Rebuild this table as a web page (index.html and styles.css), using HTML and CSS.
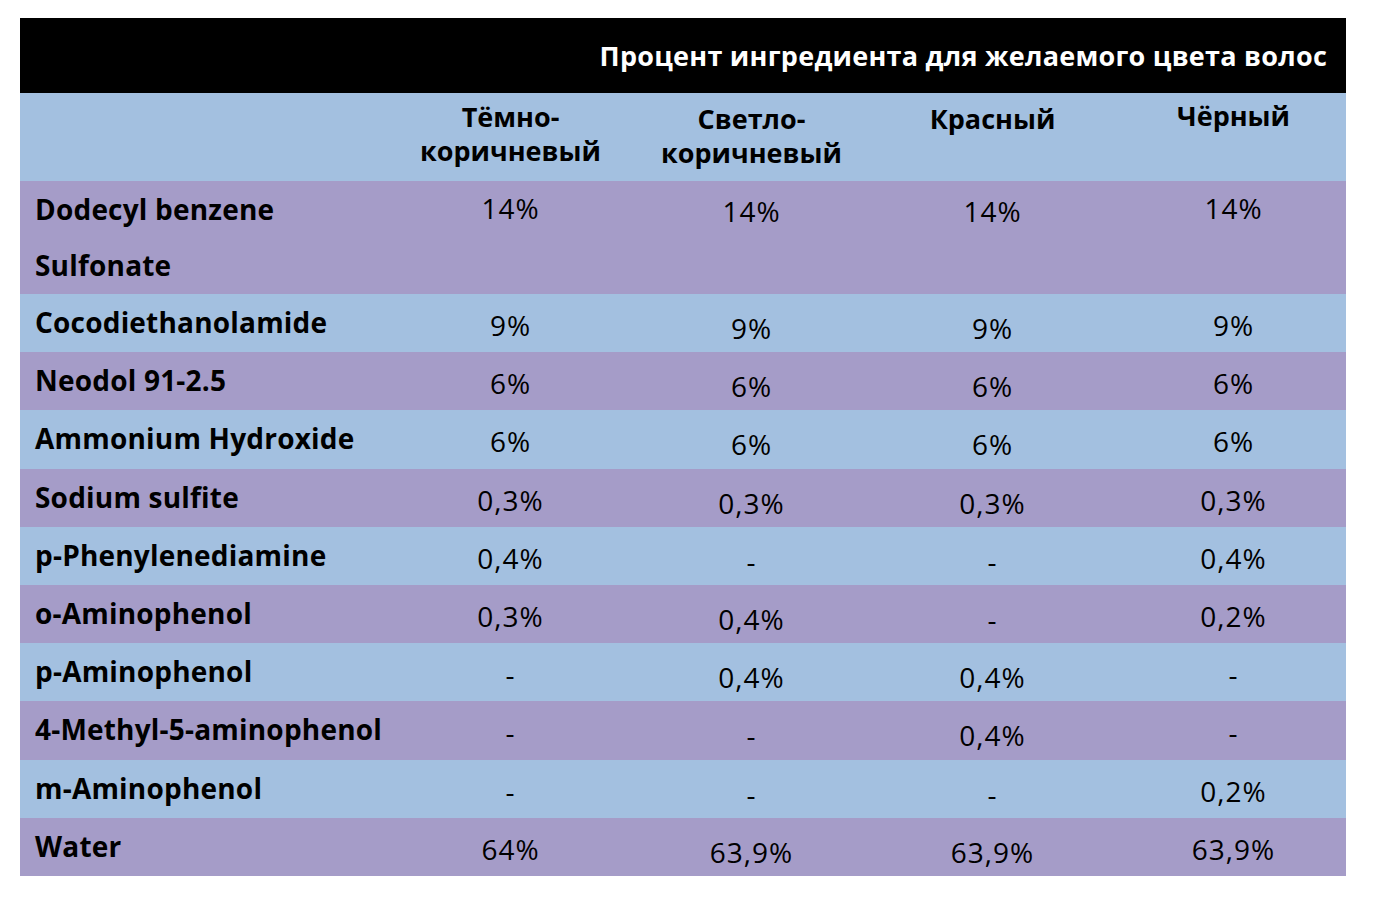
FILE: index.html
```html
<!DOCTYPE html>
<html lang="ru">
<head>
<meta charset="utf-8">
<title>Процент ингредиента</title>
<link rel="stylesheet" href="styles.css">
</head>
<body>
<div class="sheet">
<table class="recipe">
  <colgroup>
    <col class="c-name">
    <col class="c-val">
    <col class="c-val">
    <col class="c-val">
    <col class="c-last">
  </colgroup>
  <thead>
    <tr class="title-row">
      <th colspan="5" class="title">Процент ингредиента для желаемого цвета волос</th>
    </tr>
    <tr class="head-row">
      <th class="blank"></th>
      <th class="h h2">Тёмно-<br>коричневый</th>
      <th class="h h3">Светло-<br>коричневый</th>
      <th class="h h4">Красный</th>
      <th class="h h5">Чёрный</th>
    </tr>
  </thead>
  <tbody>
    <tr class="odd first"><td class="name">Dodecyl benzene<br>Sulfonate</td><td class="v v2">14%</td><td class="v v3">14%</td><td class="v v4">14%</td><td class="v v5">14%</td></tr>
    <tr class="even"><td class="name">Cocodiethanolamide</td><td class="v v2">9%</td><td class="v v3">9%</td><td class="v v4">9%</td><td class="v v5">9%</td></tr>
    <tr class="odd"><td class="name">Neodol 91-2.5</td><td class="v v2">6%</td><td class="v v3">6%</td><td class="v v4">6%</td><td class="v v5">6%</td></tr>
    <tr class="even"><td class="name">Ammonium Hydroxide</td><td class="v v2">6%</td><td class="v v3">6%</td><td class="v v4">6%</td><td class="v v5">6%</td></tr>
    <tr class="odd"><td class="name">Sodium sulfite</td><td class="v v2">0,3%</td><td class="v v3">0,3%</td><td class="v v4">0,3%</td><td class="v v5">0,3%</td></tr>
    <tr class="even"><td class="name">p-Phenylenediamine</td><td class="v v2">0,4%</td><td class="v v3">-</td><td class="v v4">-</td><td class="v v5">0,4%</td></tr>
    <tr class="odd"><td class="name">o-Aminophenol</td><td class="v v2">0,3%</td><td class="v v3">0,4%</td><td class="v v4">-</td><td class="v v5">0,2%</td></tr>
    <tr class="even"><td class="name">p-Aminophenol</td><td class="v v2">-</td><td class="v v3">0,4%</td><td class="v v4">0,4%</td><td class="v v5">-</td></tr>
    <tr class="odd"><td class="name">4-Methyl-5-aminophenol</td><td class="v v2">-</td><td class="v v3">-</td><td class="v v4">0,4%</td><td class="v v5">-</td></tr>
    <tr class="even"><td class="name">m-Aminophenol</td><td class="v v2">-</td><td class="v v3">-</td><td class="v v4">-</td><td class="v v5">0,2%</td></tr>
    <tr class="odd"><td class="name">Water</td><td class="v v2">64%</td><td class="v v3">63,9%</td><td class="v v4">63,9%</td><td class="v v5">63,9%</td></tr>
  </tbody>
</table>
</div>
</body>
</html>
```
FILE: styles.css
```css
html, body {
  margin: 0;
  padding: 0;
  background: #ffffff;
}

body {
  font-family: "Open Sans", "Noto Sans", sans-serif;
  color: #000000;
}

.sheet {
  padding: 18px 0 0 20px;
}

.recipe {
  border-collapse: collapse;
  border-spacing: 0;
  table-layout: fixed;
  width: 1326px;
}

.c-name { width: 370px; }
.c-val { width: 241px; }
.c-last { width: 233px; }

.recipe th,
.recipe td {
  padding: 0;
  margin: 0;
  vertical-align: top;
}

.title-row {
  height: 75px;
  background: #000000;
}

.title-row .title {
  color: #ffffff;
  font-weight: 700;
  font-size: 27px;
  letter-spacing: 0.25px;
  text-align: right;
  vertical-align: middle;
  padding-right: 19px;
}

.head-row {
  height: 88px;
  background: #a3c0e0;
}

.head-row .h {
  font-weight: 700;
  font-size: 27px;
  line-height: 34px;
  text-align: center;
}

.head-row .h2 { padding-top: 7px; }
.head-row .h3 { padding-top: 9px; }
.head-row .h4 { padding-top: 9px; }
.head-row .h5 { padding-top: 6px; padding-left: 8px; }

.odd { background: #a59cc8; }
.even { background: #a3c0e0; }

tbody tr { height: 58.2px; }
tbody tr.first { height: 113px; }

.name {
  font-weight: 700;
  font-size: 28px;
  letter-spacing: 0.2px;
  line-height: 56px;
  padding-left: 15px !important;
  white-space: nowrap;
}

.v {
  font-weight: 400;
  font-size: 28px;
  letter-spacing: 1px;
  line-height: 40px;
  text-align: center;
}

.v2, .v5 { padding-top: 11px !important; }
.v3, .v4 { padding-top: 14px !important; }
.v5 { padding-left: 8px !important; }

.first .v2, .first .v5 { padding-top: 7px !important; }
.first .v3, .first .v4 { padding-top: 10px !important; }
```
